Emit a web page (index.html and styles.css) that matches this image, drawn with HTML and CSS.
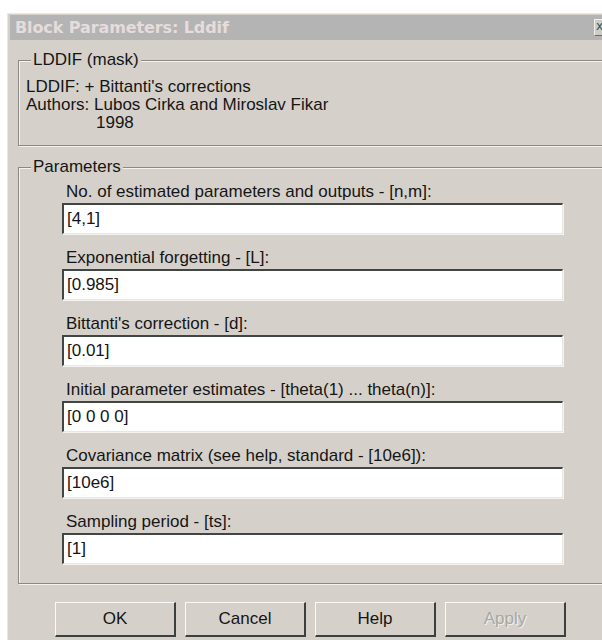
FILE: index.html
```html
<!DOCTYPE html>
<html>
<head>
<meta charset="utf-8">
<title>Block Parameters: Lddif</title>
<link rel="stylesheet" href="styles.css">
</head>
<body>
<div class="dialog">
  <div class="titlebar">
    <span class="title">Block Parameters: Lddif</span>
    <span class="close">x</span>
  </div>
  <div class="body">
    <fieldset class="group mask">
      <legend>LDDIF (mask)</legend>
      <div class="inner">
        <div class="line">LDDIF: + Bittanti's corrections</div>
        <div class="line">Authors: Lubos Cirka and Miroslav Fikar</div>
        <div class="line year">1998</div>
      </div>
    </fieldset>
    <fieldset class="group params">
      <legend>Parameters</legend>
      <div class="inner">
        <div class="field">
          <label>No. of estimated parameters and outputs - [n,m]:</label>
          <div class="edit">[4,1]</div>
        </div>
        <div class="field">
          <label>Exponential forgetting - [L]:</label>
          <div class="edit">[0.985]</div>
        </div>
        <div class="field">
          <label>Bittanti's correction - [d]:</label>
          <div class="edit">[0.01]</div>
        </div>
        <div class="field">
          <label>Initial parameter estimates - [theta(1) ... theta(n)]:</label>
          <div class="edit">[0 0 0 0]</div>
        </div>
        <div class="field">
          <label>Covariance matrix (see help, standard - [10e6]):</label>
          <div class="edit">[10e6]</div>
        </div>
        <div class="field">
          <label>Sampling period - [ts]:</label>
          <div class="edit">[1]</div>
        </div>
      </div>
    </fieldset>
    <div class="buttons">
      <button class="btn">OK</button>
      <button class="btn">Cancel</button>
      <button class="btn">Help</button>
      <button class="btn disabled">Apply</button>
    </div>
  </div>
</div>
</body>
</html>
```
FILE: styles.css
```css
html, body {
  margin: 0;
  height: 640px;
  overflow: hidden;
  background: #ffffff;
}

body {
  font-family: "Liberation Sans", Arial, sans-serif;
  font-size: 17px;
  color: #151515;
}

.dialog {
  margin: 13px 0 0 7px;
  width: 607px;
  height: 700px;
  padding: 1px 3px 0 2px;
  background: #d5d1ca;
  border-top: 1px solid #ebe8e3;
  border-left: 1px solid #ebe8e3;
}

/* inactive caption */
.titlebar {
  height: 25px;
  display: flex;
  align-items: center;
  background: #b4b4b4;
  padding-left: 5px;
}

.title {
  font-family: "DejaVu Sans", Verdana, sans-serif;
  font-weight: bold;
  font-size: 16px;
  color: #e6dcdc;
  letter-spacing: -0.1px;
}

.close {
  margin-left: auto;
  margin-right: 3px;
  width: 20px;
  height: 17px;
  box-sizing: border-box;
  background: #d0ccc5;
  border-top: 1px solid #f2f0ec;
  border-left: 1px solid #f2f0ec;
  border-bottom: 1px solid #6e6c68;
  font-family: "DejaVu Sans", sans-serif;
  font-size: 12px;
  line-height: 13px;
  padding-left: 1px;
  color: #2d5a58;
}

.body {
  padding-left: 8px;
}

/* etched group frame */
.group {
  margin: 0;
  padding: 0;
  border: 1px solid #8b8985;
  box-shadow: inset 1px 1px 0 #f4f2ee, 1px 1px 0 #f4f2ee;
}

.group legend {
  margin-left: 12px;
  padding: 0 2px;
  line-height: 20px;
  background: #d5d1ca;
}

.mask {
  margin-top: 10px;
}

.mask .inner {
  padding: 8px 0 13px 7px;
}

.line {
  line-height: 18px;
}

.year {
  padding-left: 70px;
}

.params {
  margin-top: 11px;
}

.params .inner {
  padding: 6px 0 19px 43px;
}

.field {
  display: flex;
  flex-direction: column;
  margin-bottom: 15px;
}

.field:last-child {
  margin-bottom: 0;
}

.field label {
  line-height: 18px;
  margin-left: 4px;
  margin-bottom: 2px;
}

/* sunken edit box */
.edit {
  width: 501px;
  height: 31px;
  box-sizing: border-box;
  background: #ffffff;
  border-top: 2px solid #3f4644;
  border-left: 2px solid #3f4644;
  border-right: 1px solid #e8e6e2;
  border-bottom: 1px solid #e8e6e2;
  box-shadow: 1px 1px 0 #f6f4f0;
  padding: 3px 0 0 3px;
  line-height: 22px;
}

.buttons {
  display: flex;
  gap: 9px;
  margin-top: 18px;
  padding-left: 37px;
}

.btn {
  width: 121px;
  height: 35px;
  box-sizing: border-box;
  background: #d5d1ca;
  border-top: 1px solid #fbfaf8;
  border-left: 1px solid #fbfaf8;
  border-right: 2px solid #3b403f;
  border-bottom: 2px solid #3b403f;
  font-family: "Liberation Sans", Arial, sans-serif;
  font-size: 17px;
  color: #151515;
  padding: 0;
}

.btn.disabled {
  color: #a4a8a8;
  text-shadow: 1px 1px 0 #f2f0ec;
}
```
